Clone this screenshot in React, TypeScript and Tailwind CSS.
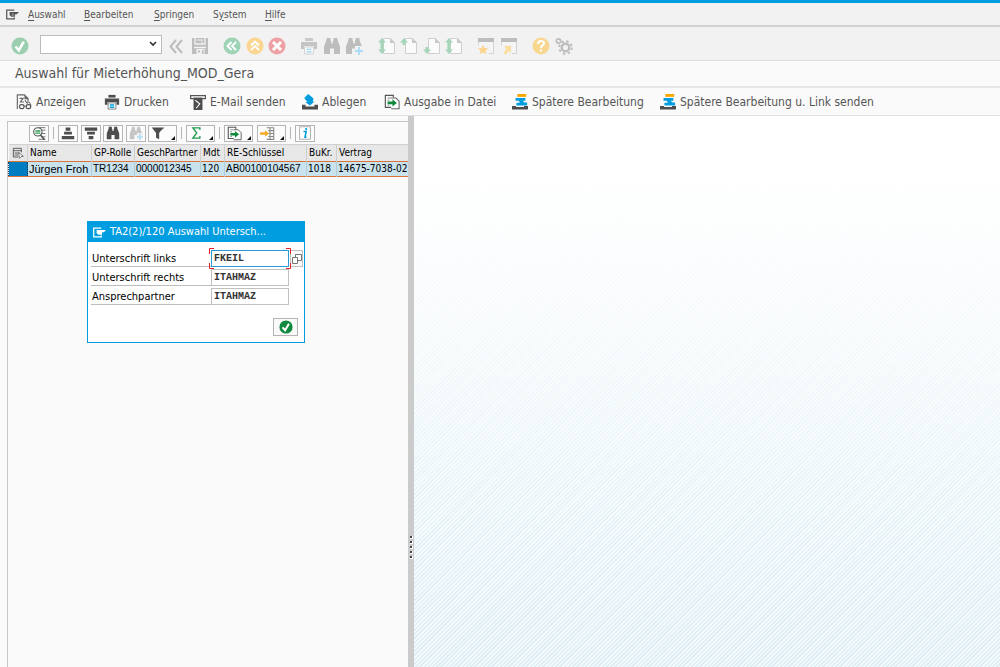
import React from "react";

type IconProps = {
  className?: string;
  children?: React.ReactNode;
};

function Icon({ className = "size-[18px]", children }: IconProps) {
  return (
    <svg viewBox="0 0 18 18" className={`shrink-0 ${className}`} fill="none" aria-hidden="true">
      {children}
    </svg>
  );
}

function SessionIcon({ className = "size-[13px]" }: { className?: string }) {
  return (
    <Icon className={className}>
      <path d="M11.500 3H1v12h10.500v-2" stroke="currentColor" strokeWidth="1.700" />
      <path d="M5 5.500h13L15 8.500h-2.500V12H7.500L5 10z" fill="currentColor" />
      <path d="M8 8.500h3M8 10.500h2.500" stroke="#fff" strokeOpacity=".6" />
    </Icon>
  );
}

function Binoculars({ className, plus = false }: { className?: string; plus?: boolean }) {
  return (
    <Icon className={className}>
      <path d="M3.500 1h4v2l.7 1.500v2h1.600v-2l.7-1.500V1h4v2L17 9.500V17h-6v-5.500H7V17H1V9.500L3.500 3z" fill="currentColor" />
      {plus && (
        <>
          <path d="M10 9h8v9h-8z" fill="#f2f2f2" />
          <path d="M14 10v8M10 14h8" stroke="#a9dcf5" strokeWidth="1.800" />
        </>
      )}
    </Icon>
  );
}

function PrinterIcon({ faded = false, className }: { faded?: boolean; className?: string }) {
  return (
    <Icon className={className}>
      <path d="M5 1h8v3H5z" fill={faded ? "#c9c9c9" : "#4d4d4d"} />
      <path d="M1 5h16v7h-3V9H4v3H1z" fill={faded ? "#c4c4c4" : "#4d4d4d"} />
      <path d="M4.600 10h8.800v7H4.600z" fill="#fff" stroke={faded ? "#cfcfcf" : "#777"} />
      <path d="M6.500 12.300h5M6.500 14.800h5" stroke={faded ? "#b4dcf2" : "#009de0"} strokeWidth="1.700" />
    </Icon>
  );
}

function CheckCircle({ color, className }: { color: string; className?: string }) {
  return (
    <Icon className={className}>
      <circle cx="9" cy="9" r="8.500" fill={color} />
      <path d="M4.500 9.500l3.300 3.700 5-8.500" stroke="#fff" strokeWidth="2.600" />
    </Icon>
  );
}

type PageMode = "first" | "previous" | "next" | "last";

function PageIcon({ mode }: { mode: PageMode }) {
  return (
    <Icon>
      <path d="M5.500 1.500h7l4 4v11h-11z" fill="#fbfbfb" stroke="#cfcfcf" />
      <path d="M12 1v5h5z" fill="#c8c8c8" />
      {mode !== "next" && (
        <path d="M4 1L0 5.500h2.500V8h3V5.500H8z" fill="#a6d5ba" />
      )}
      {mode !== "previous" && (
        <path d="M4 17L0 12.500h2.500V10h3v2.500H8z" fill="#a6d5ba" />
      )}
      {(mode === "first" || mode === "last") && <path d="M2.500 7h3v4h-3z" fill="#a6d5ba" />}
    </Icon>
  );
}

function WindowIcon({ shortcut = false }: { shortcut?: boolean }) {
  return (
    <Icon>
      <path d="M1.500 1.500h15v15h-15z" fill="#f5f5f5" stroke="#d4d4d4" />
      <path d="M1 1h16v4H1z" fill="#bdbdbd" />
      <path d="M0 8h12v10H0z" fill="#f2f2f2" />
      {shortcut ? (
        <path d="M4 9h7v7l-2.300-2.300L6 17.500 3.500 16l3-4.300z" fill="#fbdc9b" />
      ) : (
        <path d="M6 8l1.400 2.900 3.600.4-2.500 2.400.6 3.400L6 15.400l-3.100 1.700.6-3.400L1 11.300l3.600-.4z" fill="#fbd48e" />
      )}
    </Icon>
  );
}

function ExportIcon({ className }: { className?: string }) {
  return (
    <Icon className={className}>
      <path d="M9 15H1.500V1.500h9V4" fill="#fff" stroke="#555" strokeWidth="1.300" />
      <path d="M4 4.500h4M4 7h2M4 12.500h2" stroke="#777" />
      <path d="M8 4.500h5.500L17 8v8.500H8" fill="#fff" stroke="#666" strokeWidth="1.200" />
      <path d="M4 8.500h5.500V6l5 4-5 4v-2.500H4z" fill="#128a3c" />
    </Icon>
  );
}

function LaterIcon({ className }: { className?: string }) {
  return (
    <Icon className={className}>
      <path d="M6 0h10v3.200H6z" fill="#f6a800" />
      <path d="M4 4.500h11v3.200h-3l2 1.800h3v3.500H5V9.800h4L7.500 7.700H4z" fill="#009de0" />
      <path d="M0 13.500h4.500v1h9v-1H18v4H0z" fill="#4d4d4d" />
    </Icon>
  );
}

const menuItems = [
  { key: "A", before: "", rest: "uswahl", width: "w-[56px]" },
  { key: "B", before: "", rest: "earbeiten", width: "w-[70px]" },
  { key: "S", before: "", rest: "pringen", width: "w-[59px]" },
  { key: "y", before: "S", rest: "stem", width: "w-[52px]" },
  { key: "H", before: "", rest: "ilfe", width: "w-[40px]" },
];

const actions = [
  {
    label: "Anzeigen",
    width: "w-[88px]",
    icon: (
      <Icon className="size-4">
        <path d="M1.500 17V1h8l4 4v5" stroke="#666" strokeWidth="1.300" />
        <path d="M9.500 1v5h5z" fill="#666" />
        <path d="M4 5h4L5 9h4M10 7l3 4" stroke="#666" strokeWidth="1.300" />
        <rect x="4" y="12" width="5" height="4.500" rx="2" stroke="#555" strokeWidth="1.400" />
        <rect x="11.500" y="12" width="5" height="4.500" rx="2" stroke="#555" strokeWidth="1.400" />
        <path d="M9 13.500h2.500M15 9l2 4" stroke="#555" />
      </Icon>
    ),
  },
  { label: "Drucken", width: "w-[86px]", icon: <PrinterIcon className="size-4" /> },
  {
    label: "E-Mail senden",
    width: "w-[112px]",
    icon: (
      <Icon className="size-4">
        <path d="M.700 1.700h16.600v3.600H.700z" fill="#fff" stroke="#555" strokeWidth="1.400" />
        <path d="M4 4h10v14H4z" fill="#4d4d4d" />
        <path d="M6 7l5 4-4 5" stroke="#fff" strokeWidth="1.200" />
      </Icon>
    ),
  },
  {
    label: "Ablegen",
    width: "w-[82px]",
    icon: (
      <Icon className="size-4">
        <path d="M7 0l6 5-1 3.500h2L9 13 3.500 9H6L2.500 4.500z" fill="#009de0" />
        <path d="M0 12h4v2h10v-2h4v5.500H0z" fill="#4d4d4d" />
      </Icon>
    ),
  },
  { label: "Ausgabe in Datei", width: "w-[128px]", icon: <ExportIcon className="size-4" /> },
  { label: "Spätere Bearbeitung", width: "w-[148px]", icon: <LaterIcon className="size-4" /> },
  { label: "Spätere Bearbeitung u. Link senden", width: "w-[220px]", icon: <LaterIcon className="size-4" /> },
];

function ToolButton({ label, children }: { label: string; children: React.ReactNode }) {
  return (
    <button type="button" aria-label={label} className="flex shrink-0 items-center justify-center">
      {children}
    </button>
  );
}

function GridButton({
  label,
  menu = false,
  children,
}: {
  label: string;
  menu?: boolean;
  children: React.ReactNode;
}) {
  return (
    <button
      type="button"
      aria-label={label}
      className={`flex h-[17px] shrink-0 items-center border border-[#b5b5b5] bg-[#fcfcfc] text-[#4d4d4d] ${
        menu ? "w-[29px] justify-between pl-[2px] pr-px" : "w-5 justify-center"
      }`}
    >
      {children}
      {menu && (
        <svg viewBox="0 0 5 5" className="size-[5px] self-end" aria-hidden="true">
          <path d="M5 0v4H1z" fill="#111" />
        </svg>
      )}
    </button>
  );
}

function Divider() {
  return <span className="mx-1 h-3 w-px shrink-0 bg-[#b5b5b5]" />;
}

const columns = [
  { title: "Name", value: "Jürgen Froh", width: "w-[64px]", font: "font-['Liberation_Sans',sans-serif] text-[11px]" },
  { title: "GP-Rolle", value: "TR1234", width: "w-[43px]", font: "font-['Liberation_Sans',sans-serif] text-[10px]" },
  { title: "GeschPartner", value: "0000012345", width: "w-[66px]", font: "font-['Liberation_Sans',sans-serif] text-[10px]" },
  { title: "Mdt", value: "120", width: "w-[24px]", font: "text-[10px]" },
  { title: "RE-Schlüssel", value: "AB00100104567", width: "w-[82px]", font: "font-['Liberation_Sans',sans-serif] text-[10px]" },
  { title: "BuKr.", value: "1018", width: "w-[30px]", font: "text-[10px]" },
  { title: "Vertrag", value: "14675-7038-02", width: "w-[73px]", font: "text-[10px]" },
];

const signFields = [
  { id: "left", label: "Unterschrift links", value: "FKEIL", active: true },
  { id: "right", label: "Unterschrift rechts", value: "ITAHMAZ", active: false },
  { id: "contact", label: "Ansprechpartner", value: "ITAHMAZ", active: false },
];

function SystemToolbar() {
  return (
    <div className="flex h-[34px] items-center border-b border-[#dedede] bg-[#f2f2f2] pl-[11px] pt-1 text-[#bdbdbd]">
      <ToolButton label="Enter">
        <CheckCircle color="#9bcfb0" />
      </ToolButton>
      <div className="relative ml-[11px] pb-[2px]">
        <select
          aria-label="Befehl"
          className="block h-[19px] w-[122px] appearance-none border border-[#bcbcbc] bg-white text-[11px] text-black"
        >
          <option></option>
        </select>
        <svg viewBox="0 0 8 6" className="pointer-events-none absolute right-[5px] top-[6px] h-[6px] w-2" fill="none">
          <path d="M1 1l3 3 3-3" stroke="#333" strokeWidth="1.600" />
        </svg>
      </div>
      <div className="ml-[5px] flex w-[42px] justify-between">
        <ToolButton label="Einklappen">
          <Icon>
            <path d="M9 3L3.500 9.500 9 16M15 3L9.500 9.500 15 16" stroke="#bdbdbd" strokeWidth="2.100" />
          </Icon>
        </ToolButton>
        <ToolButton label="Sichern">
          <Icon>
            <path d="M1 1h16v16H1z" fill="#bdbdbd" />
            <path d="M4 1v6h10V1M3 10.500h12" stroke="#f2f2f2" strokeWidth="1.300" />
            <path d="M11 2v4M6 3h4" stroke="#f2f2f2" />
            <path d="M5.500 12h8v5h-8z" fill="#f2f2f2" />
            <path d="M7 13.500h2v2H7zM11 13h1.500v4H11z" fill="#bdbdbd" />
          </Icon>
        </ToolButton>
      </div>
      <div className="ml-[14px] flex w-[63px] justify-between">
        <ToolButton label="Zurück">
          <Icon>
            <circle cx="9" cy="9" r="8.500" fill="#9fd3b6" />
            <path d="M8.500 5L4.500 9l4 4M13 5L9 9l4 4" stroke="#fff" strokeWidth="1.900" />
          </Icon>
        </ToolButton>
        <ToolButton label="Beenden">
          <Icon>
            <circle cx="9" cy="9" r="8.500" fill="#fad690" />
            <path d="M5 8.500l4-4 4 4M5 13l4-4 4 4" stroke="#fff" strokeWidth="1.900" />
          </Icon>
        </ToolButton>
        <ToolButton label="Abbrechen">
          <Icon>
            <circle cx="9" cy="9" r="8.500" fill="#eda1a5" />
            <path d="M5 5l8 8M13 5l-8 8" stroke="#fff" strokeWidth="2.900" />
          </Icon>
        </ToolButton>
      </div>
      <div className="ml-[14px] flex w-[63px] justify-between">
        <ToolButton label="Drucken">
          <PrinterIcon faded />
        </ToolButton>
        <ToolButton label="Suchen">
          <Binoculars />
        </ToolButton>
        <ToolButton label="Weitersuchen">
          <Binoculars plus />
        </ToolButton>
      </div>
      <div className="ml-[15px] flex w-[85px] justify-between">
        <ToolButton label="Erste Seite">
          <PageIcon mode="first" />
        </ToolButton>
        <ToolButton label="Vorige Seite">
          <PageIcon mode="previous" />
        </ToolButton>
        <ToolButton label="Nächste Seite">
          <PageIcon mode="next" />
        </ToolButton>
        <ToolButton label="Letzte Seite">
          <PageIcon mode="last" />
        </ToolButton>
      </div>
      <div className="ml-[14px] flex w-[41px] justify-between">
        <ToolButton label="Neuer Modus">
          <WindowIcon />
        </ToolButton>
        <ToolButton label="Verknüpfung anlegen">
          <WindowIcon shortcut />
        </ToolButton>
      </div>
      <div className="ml-[14px] flex w-[41px] justify-between">
        <ToolButton label="Hilfe">
          <Icon>
            <circle cx="9" cy="9" r="8.500" fill="#f8d891" />
            <path d="M6 7c0-4 6-3.800 6-.700 0 2-3 2-3 4.700" stroke="#fff" strokeWidth="2" />
            <path d="M8 12.500h2v2H8z" fill="#fff" />
          </Icon>
        </ToolButton>
        <ToolButton label="Layout anpassen">
          <Icon>
            <circle cx="10.500" cy="10.500" r="3.800" stroke="#bdbdbd" strokeWidth="2.400" />
            <circle cx="10.500" cy="10.500" r="6.300" stroke="#bdbdbd" strokeWidth="2" strokeDasharray="2.400 2.548" />
            <circle cx="3.500" cy="4" r="2.200" stroke="#bdbdbd" strokeWidth="1.700" />
          </Icon>
        </ToolButton>
      </div>
    </div>
  );
}

function GridToolbar() {
  return (
    <div className="flex h-[22px] shrink-0 items-center pl-[21px]">
      <GridButton label="Details">
        <Icon className="size-[15px]">
          <path d="M8 2h8M8 16h8M11 5h5M11 9h5M11 13h5" stroke="#777" strokeWidth="1.200" />
          <circle cx="7" cy="7" r="5" fill="#fff" stroke="#555" strokeWidth="1.300" />
          <path d="M4 6h6M4 8.500h6" stroke="#2f9a55" strokeWidth="1.600" />
          <path d="M10 10.500l5 6" stroke="#555" strokeWidth="2" />
        </Icon>
      </GridButton>
      <Divider />
      <div className="flex w-[119px] justify-between">
        <GridButton label="Aufsteigend sortieren">
          <Icon className="size-[14px]">
            <path d="M6 2h6v4H6zM4 7.500h10v3.500H4zM1 13h16v4H1z" fill="currentColor" />
          </Icon>
        </GridButton>
        <GridButton label="Absteigend sortieren">
          <Icon className="size-[14px]">
            <path d="M1 2h16v4H1zM4 7.500h10v3.500H4zM6 13h6v4H6z" fill="currentColor" />
          </Icon>
        </GridButton>
        <GridButton label="Suchen">
          <Binoculars className="size-[14px]" />
        </GridButton>
        <GridButton label="Weitersuchen">
          <span className="text-[#c6c6c6]">
            <Binoculars plus className="size-[14px]" />
          </span>
        </GridButton>
        <GridButton label="Filter" menu>
          <Icon className="size-[14px]">
            <path d="M1 2h15l-5.500 7v8l-4-2V9z" fill="currentColor" />
            <path d="M13 5l4-3" stroke="currentColor" />
          </Icon>
        </GridButton>
      </div>
      <Divider />
      <GridButton label="Summe" menu>
        <Icon className="size-[14px]">
          <path d="M14 5V2.500H5L10 9l-5 6.500h9V13" stroke="#1d9a4a" strokeWidth="1.700" />
        </Icon>
      </GridButton>
      <Divider />
      <div className="flex gap-1">
        <GridButton label="Exportieren" menu>
          <ExportIcon className="size-[15px]" />
        </GridButton>
        <GridButton label="Layout" menu>
          <Icon className="size-[15px]">
            <path d="M8 2h9M8 16h9M10 5.500h7M10 12.500h7M9 9h8M12 2v14M16.500 2v14" stroke="#888" strokeWidth="1.300" />
            <path d="M0 7.500h6V5l5 4-5 4v-2.500H0z" fill="#f6ab26" />
          </Icon>
        </GridButton>
      </div>
      <Divider />
      <GridButton label="Information">
        <Icon className="size-[14px]">
          <path d="M2 1h14v16H2z" fill="#fff" stroke="#999" />
          <path d="M7 7h3.500L9 14.500h2" stroke="#009de0" strokeWidth="2" />
          <circle cx="10.500" cy="4" r="1.400" fill="#009de0" />
        </Icon>
      </GridButton>
    </div>
  );
}

function TenantGrid() {
  return (
    <section className="flex min-w-0 flex-1 flex-col overflow-hidden border-l border-t border-[#c6c6c6] bg-[#fafafa]">
      <GridToolbar />
      <div className="overflow-hidden">
        <table className="w-[401px] table-fixed border-collapse text-left text-black">
          <thead>
            <tr className="h-[17px] border-t border-[#d0d0d0] bg-[#e7e7e7] text-[10px] leading-[16px]">
              <th className="w-[19px] border-r border-[#cfcfcf] p-0 font-normal">
                <Icon className="mx-auto size-3">
                  <path d="M14 8V2H2v13h7M2 5.500h12M4 9h6M4 12h5" stroke="#555" strokeWidth="1.400" />
                  <path d="M10 8l7 6-3.500.500L11 17z" fill="#fff" stroke="#555" strokeWidth="1.200" />
                </Icon>
              </th>
              {columns.map((column) => (
                <th
                  key={column.title}
                  className={`${column.width} whitespace-nowrap border-r border-[#cfcfcf] p-0 pl-[2px] font-normal`}
                >
                  {column.title}
                </th>
              ))}
            </tr>
          </thead>
          <tbody>
            <tr className="h-[15px] border-y border-[#d9753b] bg-[#c9e3ee] leading-[14px]">
              <td className="border border-dotted border-[#1d3c5c] bg-[#007cc0] p-0"></td>
              {columns.map((column) => (
                <td
                  key={column.title}
                  className={`${column.font} whitespace-nowrap border-r border-[#b4cdd8] p-0 pl-px`}
                >
                  {column.value}
                </td>
              ))}
            </tr>
          </tbody>
        </table>
      </div>
    </section>
  );
}

function SignatureDialog() {
  return (
    <form
      role="dialog"
      aria-label="Auswahl Unterschrift"
      className="absolute left-[87px] top-[105px] w-[218px] border border-[#009de0] bg-white text-black"
    >
      <header className="flex h-5 items-center gap-1 bg-[#009de0] pl-[5px] text-[11px] text-white">
        <SessionIcon />
        <span>TA2(2)/120 Auswahl Untersch...</span>
      </header>
      <div className="flex flex-col pl-[3px] pt-[7px]">
        {signFields.map((field) => (
          <div key={field.id} className="flex h-[19px] items-center">
            <label
              htmlFor={field.id}
              className="flex h-[17px] w-[120px] items-center border-b border-[#bdbdbd] pl-px pt-[2px] text-[11px]"
            >
              {field.label}
            </label>
            <div className="relative">
              <input
                id={field.id}
                defaultValue={field.value}
                className={`block h-[17px] w-[78px] border bg-white px-[2px] font-['Liberation_Mono',monospace] text-[10px] font-bold text-[#333] outline-none ${
                  field.active ? "border-[#2d9bd3]" : "border-[#c0c0c0]"
                }`}
              />
              {field.active && (
                <svg
                  viewBox="0 0 82 21"
                  className="pointer-events-none absolute -left-[2px] -top-[2px] h-[21px] w-[82px]"
                  fill="none"
                >
                  <path d="M.500 6V.500H5M77 .500h4.500V6M.500 15v5.500H5M77 20.500h4.500V15" stroke="#e5202b" />
                </svg>
              )}
            </div>
            {field.active && (
              <button
                type="button"
                aria-label="Wertehilfe"
                className="ml-px flex h-[17px] w-[13px] items-center justify-center border border-[#c0c0c0] bg-[#fafafa]"
              >
                <svg viewBox="0 0 10 10" className="size-[10px] shrink-0" fill="none">
                  <path d="M3.500.500h6v6h-6z" fill="#fff" stroke="#777" />
                  <path d="M.500 3.500h5v6h-5z" fill="#fff" stroke="#777" />
                </svg>
              </button>
            )}
          </div>
        ))}
      </div>
      <div className="flex justify-end pb-[6px] pr-[6px] pt-[12px]">
        <button
          type="button"
          aria-label="Weiter"
          className="flex h-[18px] w-[25px] items-center justify-center border border-[#b5b5b5] bg-[#fafafa]"
        >
          <CheckCircle color="#0f8a3e" className="size-[14px]" />
        </button>
      </div>
    </form>
  );
}

export default function App() {
  return (
    <div className="flex min-h-screen flex-col overflow-hidden bg-[#f2f2f2] font-['DejaVu_Sans_Condensed','DejaVu_Sans',sans-serif] text-[#555]">
      <nav className="flex h-[27px] items-center border-b-2 border-t-[3px] border-b-[#d2d2d2] border-t-[#009de0] pl-[6px]">
        <SessionIcon />
        <div className="ml-[9px] flex text-[10px]">
          {menuItems.map((item) => (
            <button key={item.rest} type="button" className={`${item.width} text-left`}>
              {item.before}
              <span className="underline underline-offset-2">{item.key}</span>
              {item.rest}
            </button>
          ))}
        </div>
      </nav>

      <SystemToolbar />

      <h1 className="flex h-[27px] items-center border-b-2 border-[#e6e6e6] bg-[#fafafa] pl-[15px] text-[14px]">
        Auswahl für Mieterhöhung_MOD_Gera
      </h1>

      <div className="flex h-7 items-center border-b border-[#e0e0e0] bg-[#fafafa] pl-4 text-[12px]">
        {actions.map((action) => (
          <button
            key={action.label}
            type="button"
            className={`${action.width} flex shrink-0 items-center gap-1 whitespace-nowrap text-left`}
          >
            {action.icon}
            {action.label}
          </button>
        ))}
      </div>

      {/* Work area */}
      <main className="relative flex flex-1 bg-[#fafafa]">
        <div className="flex w-[408px] shrink-0 pl-[7px] pt-[5px]">
          <TenantGrid />
        </div>
        <div className="flex w-[6px] shrink-0 flex-col items-center bg-[#cbcbcb] pt-[420px]">
          <div className="flex flex-col gap-[2px]">
            {[0, 1, 2, 3, 4].map((dot) => (
              <span key={dot} className="size-[3px] border-b border-r border-white bg-[#444]" />
            ))}
          </div>
        </div>
        <div className="flex flex-1 bg-[repeating-linear-gradient(135deg,#d9ebf2_0px,#d9ebf2_1px,#f3fafd_2px,#f3fafd_3px)]">
          <div className="flex-1 bg-linear-to-b from-white from-10% to-white/10" />
        </div>
        <SignatureDialog />
      </main>
    </div>
  );
}
